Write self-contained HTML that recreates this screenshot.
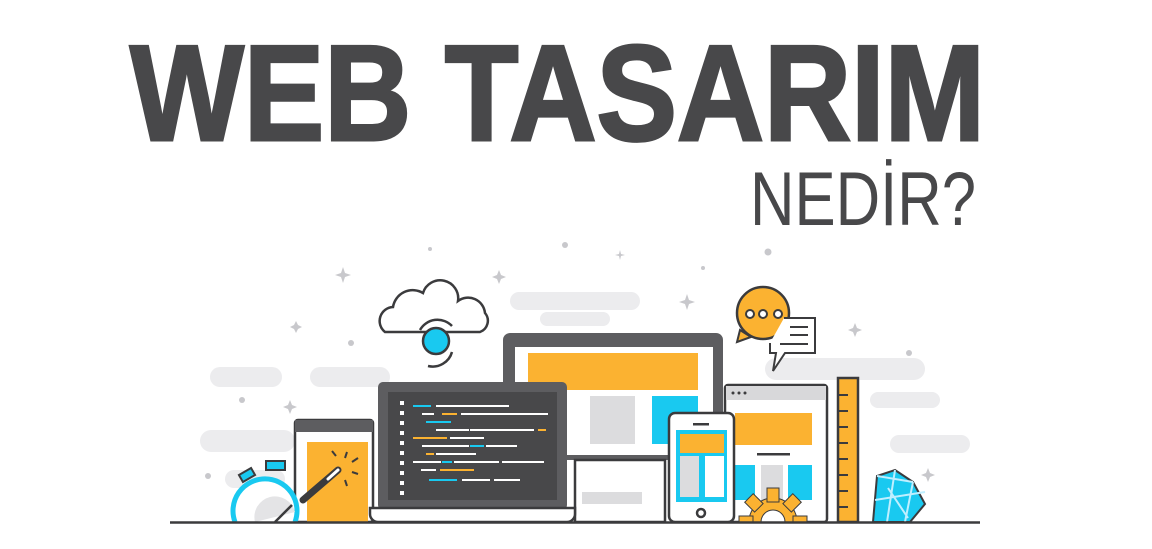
<!DOCTYPE html>
<html><head><meta charset="utf-8"><style>
html,body{margin:0;padding:0;background:#fff;width:1152px;height:549px;overflow:hidden}
svg{display:block}
</style></head><body>
<svg width="1152" height="549" viewBox="0 0 1152 549" xmlns="http://www.w3.org/2000/svg">
<text x="130" y="140" font-family="Liberation Sans, sans-serif" font-weight="bold" font-size="136" fill="#48484a" stroke="#48484a" stroke-width="3" textLength="855" lengthAdjust="spacingAndGlyphs">WEB TASARIM</text>
<text x="750" y="225" font-family="Liberation Sans, sans-serif" font-size="76" fill="#48484a" textLength="226" lengthAdjust="spacingAndGlyphs">NEDİR?</text>
<g fill="#ececee">
<rect x="210" y="367" width="72" height="20" rx="10"/>
<rect x="310" y="367" width="80" height="20" rx="10"/>
<rect x="200" y="430" width="95" height="22" rx="11"/>
<rect x="225" y="470" width="60" height="18" rx="9"/>
<rect x="510" y="292" width="130" height="18" rx="9"/>
<rect x="540" y="312" width="70" height="14" rx="7"/>
<rect x="765" y="358" width="160" height="22" rx="11"/>
<rect x="870" y="392" width="70" height="16" rx="8"/>
<rect x="890" y="435" width="80" height="18" rx="9"/>
</g>
<g fill="#c8c8cc">
<circle cx="565" cy="245" r="3"/><circle cx="768" cy="252" r="3.5"/><circle cx="909" cy="353" r="3"/>
<circle cx="351" cy="343" r="3"/><circle cx="242" cy="400" r="3"/><circle cx="208" cy="476" r="3"/>
<circle cx="430" cy="249" r="2"/><circle cx="703" cy="268" r="2"/>
<path d="M343 267l2 6 6 2-6 2-2 6-2-6-6-2 6-2z"/><path d="M499 270l2 5 5 2-5 2-2 5-2-5-5-2 5-2z"/>
<path d="M687 294l2 6 6 2-6 2-2 6-2-6-6-2 6-2z"/><path d="M855 323l2 5 5 2-5 2-2 5-2-5-5-2 5-2z"/>
<path d="M290 400l2 5 5 2-5 2-2 5-2-5-5-2 5-2z"/><path d="M296 321l2 4 4 2-4 2-2 4-2-4-4-2 4-2z"/>
<path d="M928 468l2 5 5 2-5 2-2 5-2-5-5-2 5-2z"/><path d="M620 250l1 4 4 1-4 1-1 4-1-4-4-1 4-1z"/>
</g>
<!-- cloud -->
<path d="M385 332 a14 14 0 0 1 8 -25 a20 20 0 0 1 30 -14 a18 18 0 0 1 35 8 a17 17 0 0 1 27 12 a12 12 0 0 1 -5 19 z" fill="#fff" stroke="#3b3b3d" stroke-width="2.5"/>
<circle cx="436" cy="341" r="13" fill="#19c9f0" stroke="#3b3b3d" stroke-width="2.5"/>
<path d="M420 330 a20 20 0 0 1 32 -4 M452 352 a20 20 0 0 1 -24 14" fill="none" stroke="#3b3b3d" stroke-width="2.5"/>
<!-- monitor -->
<rect x="503" y="333" width="220" height="127" rx="7" fill="#5d5d60"/>
<rect x="515" y="347" width="198" height="108" fill="#fff"/>
<rect x="528" y="353" width="170" height="37" fill="#fbb231"/>
<rect x="590" y="396" width="45" height="48" fill="#dcdcde"/>
<rect x="652" y="396" width="46" height="48" fill="#19c9f0"/>
<rect x="575" y="460" width="90" height="62" fill="#fff" stroke="#3b3b3d" stroke-width="2.5"/>
<rect x="582" y="492" width="60" height="12" fill="#dcdcde"/>
<!-- left browser -->
<rect x="295" y="420" width="78" height="102" rx="3" fill="#fff" stroke="#3b3b3d" stroke-width="2.5"/>
<rect x="295" y="420" width="78" height="12" fill="#5d5d60"/>
<rect x="307" y="442" width="61" height="80" fill="#fbb231"/>
<line x1="303" y1="500" x2="338" y2="470" stroke="#3b3b3d" stroke-width="7" stroke-linecap="round"/>
<line x1="328" y1="479" x2="338" y2="470" stroke="#fff" stroke-width="3" stroke-linecap="round"/>
<g stroke="#3b3b3d" stroke-width="2"><line x1="345" y1="458" x2="347" y2="452"/><line x1="352" y1="462" x2="358" y2="458"/><line x1="352" y1="472" x2="358" y2="474"/><line x1="336" y1="456" x2="332" y2="451"/><line x1="345" y1="480" x2="347" y2="486"/></g>
<!-- stopwatch -->
<path d="M235 522 a32 32 0 1 1 60 0" fill="#fff" stroke="#19c9f0" stroke-width="5"/>
<path d="M255 522 a18 18 0 0 1 40 -10" fill="#e4e4e6"/>
<rect x="266" y="461" width="19" height="9" fill="#19c9f0" stroke="#3b3b3d" stroke-width="2"/>
<rect x="240" y="471" width="14" height="8" fill="#19c9f0" stroke="#3b3b3d" stroke-width="2" transform="rotate(-30 247 475)"/>
<line x1="275" y1="522" x2="292" y2="505" stroke="#3b3b3d" stroke-width="2.5"/>
<!-- laptop -->
<rect x="378" y="382" width="189" height="128" rx="5" fill="#5d5d60"/>
<rect x="388" y="392" width="169" height="108" fill="#48484a"/>
<path d="M370 508h205v6a8 8 0 0 1-8 8h-189a8 8 0 0 1-8-8z" fill="#fff" stroke="#3b3b3d" stroke-width="2.5"/>
<g fill="#fff">
<rect x="400" y="401" width="4" height="4"/><rect x="400" y="411" width="4" height="4"/><rect x="400" y="421" width="4" height="4"/><rect x="400" y="431" width="4" height="4"/><rect x="400" y="441" width="4" height="4"/><rect x="400" y="451" width="4" height="4"/><rect x="400" y="461" width="4" height="4"/><rect x="400" y="471" width="4" height="4"/><rect x="400" y="481" width="4" height="4"/><rect x="400" y="491" width="4" height="4"/>
<rect x="436" y="405" width="73" height="2"/><rect x="422" y="413" width="12" height="2"/><rect x="461" y="413" width="87" height="2"/><rect x="436" y="429" width="33" height="2"/><rect x="470" y="429" width="64" height="2"/><rect x="450" y="437" width="34" height="2"/><rect x="422" y="445" width="47" height="2"/><rect x="486" y="445" width="31" height="2"/><rect x="436" y="453" width="40" height="2"/><rect x="413" y="461" width="28" height="2"/><rect x="454" y="461" width="45" height="2"/><rect x="502" y="461" width="42" height="2"/><rect x="421" y="469" width="15" height="2"/><rect x="462" y="479" width="28" height="2"/><rect x="494" y="479" width="26" height="2"/>
</g>
<g fill="#19c9f0"><rect x="413" y="405" width="18" height="2"/><rect x="426" y="421" width="25" height="2"/><rect x="470" y="445" width="14" height="2"/><rect x="442" y="461" width="10" height="2"/><rect x="429" y="479" width="28" height="2"/></g>
<g fill="#fbb231"><rect x="442" y="413" width="15" height="2"/><rect x="538" y="429" width="8" height="2"/><rect x="413" y="437" width="34" height="2"/><rect x="426" y="453" width="8" height="2"/><rect x="440" y="469" width="34" height="2"/></g>
<!-- right browser -->
<rect x="725" y="385" width="102" height="137" rx="3" fill="#fff" stroke="#3b3b3d" stroke-width="2.5"/>
<rect x="726" y="386" width="100" height="14" fill="#d8d8da"/>
<g fill="#3b3b3d"><circle cx="733" cy="393" r="1.5"/><circle cx="739" cy="393" r="1.5"/><circle cx="745" cy="393" r="1.5"/></g>
<rect x="735" y="413" width="77" height="32" fill="#fbb231"/>
<rect x="757" y="453" width="33" height="2.5" fill="#3b3b3d"/>
<rect x="735" y="465" width="20" height="35" fill="#19c9f0"/><rect x="761" y="465" width="22" height="35" fill="#dcdcde"/><rect x="788" y="465" width="24" height="35" fill="#19c9f0"/>
<!-- gear -->
<g transform="translate(773 522)" fill="#fbb231" stroke="#3b3b3d" stroke-width="1">
<circle r="24"/>
<rect x="-6" y="-34" width="12" height="14"/>
<rect x="-6" y="-34" width="12" height="14" transform="rotate(45)"/>
<rect x="-6" y="-34" width="12" height="14" transform="rotate(-45)"/>
<rect x="-6" y="-34" width="12" height="14" transform="rotate(90)"/>
<rect x="-6" y="-34" width="12" height="14" transform="rotate(-90)"/>
<circle r="12" fill="#fff"/>
</g>
<rect x="700" y="523" width="140" height="30" fill="#fff"/>
<!-- phone -->
<rect x="669" y="413" width="65" height="109" rx="6" fill="#fff" stroke="#3b3b3d" stroke-width="2.5"/>
<rect x="676" y="430" width="51" height="72" fill="#19c9f0"/>
<rect x="680" y="434" width="44" height="19" fill="#fbb231"/>
<rect x="680" y="456" width="19" height="41" fill="#dcdcde"/><rect x="705" y="456" width="19" height="41" fill="#fff"/>
<rect x="693" y="423" width="16" height="2.5" fill="#3b3b3d"/>
<circle cx="701" cy="513" r="4" fill="none" stroke="#3b3b3d" stroke-width="2.5"/>
<!-- ruler -->
<rect x="838" y="378" width="20" height="144" fill="#fbb231" stroke="#3b3b3d" stroke-width="2.5"/>
<g stroke="#3b3b3d" stroke-width="2"><line x1="838" y1="395" x2="848" y2="395"/><line x1="838" y1="411" x2="848" y2="411"/><line x1="838" y1="427" x2="848" y2="427"/><line x1="838" y1="443" x2="848" y2="443"/><line x1="838" y1="459" x2="848" y2="459"/><line x1="838" y1="475" x2="848" y2="475"/><line x1="838" y1="491" x2="848" y2="491"/><line x1="838" y1="507" x2="848" y2="507"/></g>
<!-- diamond -->
<path d="M873 522l4 -46 18 -6 18 12 12 22 -15 18z" fill="#19c9f0" stroke="#3b3b3d" stroke-width="2"/>
<path d="M877 476l36 6 M895 470l-8 52 M913 482l-8 40 M875 500l50 -8 M888 488l20 30" stroke="#bfefff" stroke-width="2" fill="none"/>
<!-- chat -->
<circle cx="763" cy="313" r="26" fill="#fbb231" stroke="#3b3b3d" stroke-width="2.5"/>
<path d="M740 330l-3 12 14 -5z" fill="#fbb231" stroke="#3b3b3d" stroke-width="2"/>
<g fill="#fff" stroke="#3b3b3d" stroke-width="2"><circle cx="750" cy="314" r="4"/><circle cx="763" cy="314" r="4"/><circle cx="778" cy="314" r="4"/></g>
<path d="M784 318h31v35h-30l-12 18 3-18h-6v-10" fill="#fff" stroke="#3b3b3d" stroke-width="2"/>
<g stroke="#3b3b3d" stroke-width="2"><line x1="790" y1="327" x2="808" y2="327"/><line x1="790" y1="335" x2="808" y2="335"/><line x1="780" y1="344" x2="808" y2="344"/></g>
<!-- ground -->
<line x1="170" y1="522.5" x2="980" y2="522.5" stroke="#3b3b3d" stroke-width="2.5"/>
</svg>
</body></html>
